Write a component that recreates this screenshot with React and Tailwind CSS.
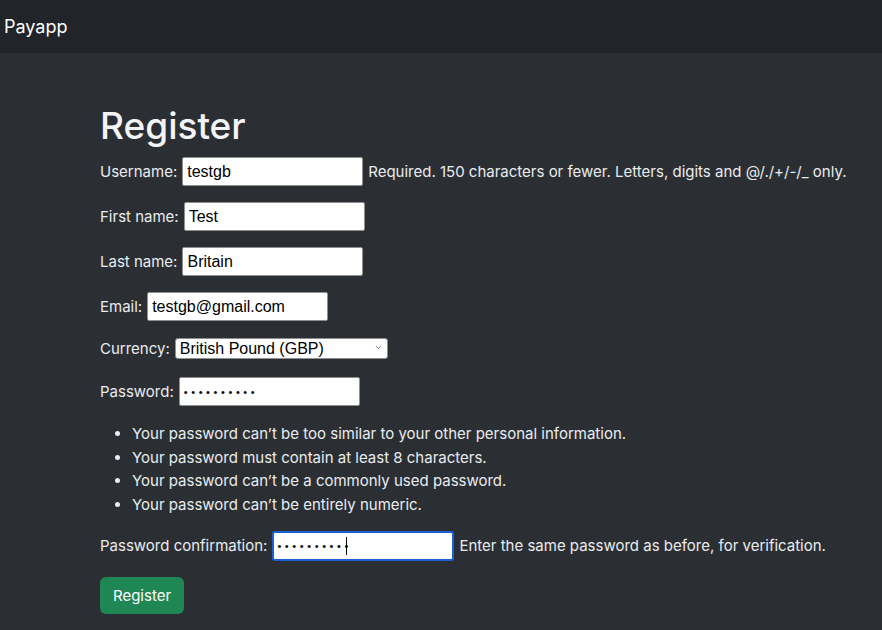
import { ChevronDown } from "lucide-react";

const baseField =
  "h-[29px] rounded-[2px] border border-[#8f8f8f] bg-white px-[4px] text-black outline-none font-['Liberation_Sans',Arial,sans-serif]";
const fieldClass = `${baseField} text-[16px]`;
const passwordClass = `${baseField} text-[11px] tracking-[3.6px]`;

const Row = ({ label, children, help }) => (
  <div className="mb-4 flex items-center gap-[5px]">
    <label className="whitespace-nowrap">{label}</label>
    {children}
    {help && <span className="whitespace-nowrap">{help}</span>}
  </div>
);

const passwordRules = [
  "Your password can’t be too similar to your other personal information.",
  "Your password must contain at least 8 characters.",
  "Your password can’t be a commonly used password.",
  "Your password can’t be entirely numeric.",
];

const App = () => {
  return (
    <div className="min-h-[630px] bg-[#2b2f34] font-['Inter','Noto_Sans',sans-serif] text-[15px] leading-6 text-[#e9ecef]">
      <nav className="flex h-[53px] items-center bg-[#212428] px-[4px]">
        <span className="text-[18px] text-white">Payapp</span>
      </nav>

      <main className="pl-[100px] pt-[50px]">
        <h1 className="mb-[8px] text-[37px] font-medium leading-[46px] text-[#f3f4f6]">Register</h1>

        <form onSubmit={(e) => e.preventDefault()}>
          <Row label="Username:" help="Required. 150 characters or fewer. Letters, digits and @/./+/-/_ only.">
            <input className={`${fieldClass} w-[181px]`} defaultValue="testgb" readOnly />
          </Row>
          <Row label="First name:">
            <input className={`${fieldClass} w-[181px]`} defaultValue="Test" readOnly />
          </Row>
          <Row label="Last name:">
            <input className={`${fieldClass} w-[181px]`} defaultValue="Britain" readOnly />
          </Row>
          <Row label="Email:">
            <input className={`${fieldClass} w-[181px]`} defaultValue="testgb@gmail.com" readOnly />
          </Row>
          <Row label="Currency:">
            <div className="relative">
              <select
                className="h-[21px] w-[213px] appearance-none rounded-[3px] border border-[#8f8f8f] bg-white pl-[4px] text-[16px] leading-[19px] text-black outline-none font-['Liberation_Sans',Arial,sans-serif]"
                defaultValue="GBP"
              >
                <option value="GBP">British Pound (GBP)</option>
                <option value="USD">US Dollar (USD)</option>
                <option value="EUR">Euro (EUR)</option>
              </select>
              <ChevronDown className="pointer-events-none absolute right-[5px] top-[6px] h-[9px] w-[9px] text-[#333]" strokeWidth={1.75} />
            </div>
          </Row>
          <Row label="Password:">
            <input type="password" className={`${passwordClass} w-[181px]`} defaultValue="abcdefghij" readOnly />
          </Row>

          <ul className="mb-[15px] mt-[2px] list-disc pl-8">
            {passwordRules.map((rule) => (
              <li key={rule} className="leading-[23.5px]">{rule}</li>
            ))}
          </ul>

          <Row label="Password confirmation:" help="Enter the same password as before, for verification.">
            <div className="relative">
              <input
                type="password"
                className="h-[30px] w-[182px] rounded-[3px] border-2 border-[#1a62d4] bg-white px-[3px] text-[11px] tracking-[3.6px] text-black outline-none font-['Liberation_Sans',Arial,sans-serif]"
                defaultValue="abcdefghij"
                readOnly
              />
              <span className="pointer-events-none absolute left-[74px] top-[6px] h-[18px] w-px bg-black" />
            </div>
          </Row>

          <button
            type="submit"
            className="h-[37px] w-[84px] rounded-[6px] bg-[#1e8754] text-[15px] text-white"
          >
            Register
          </button>
        </form>
      </main>
    </div>
  );
};

export default App;
